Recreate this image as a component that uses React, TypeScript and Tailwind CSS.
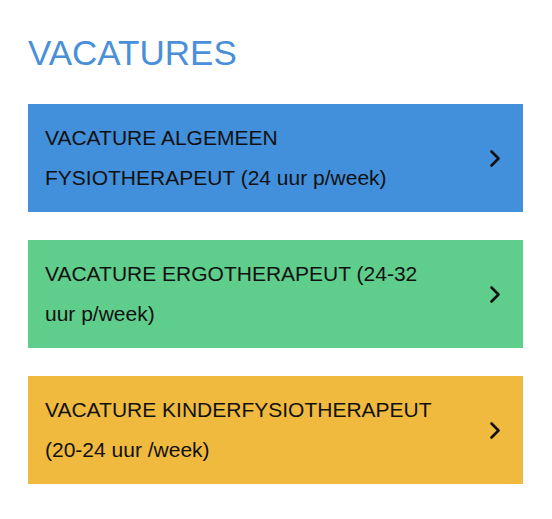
const vacatures = [
  {
    title: 'VACATURE ALGEMEEN FYSIOTHERAPEUT (24 uur p/week)',
    color: 'bg-[#428fdb]',
  },
  {
    title: 'VACATURE ERGOTHERAPEUT (24-32 uur p/week)',
    color: 'bg-[#5fcd8b]',
  },
  {
    title: 'VACATURE KINDERFYSIOTHERAPEUT (20-24 uur /week)',
    color: 'bg-[#f0ba3e]',
  },
];

const Chevron = () => (
  <svg width="12" height="19" viewBox="0 0 12 19" fill="none">
    <path
      d="M2.5 2.5l7 7-7 7"
      stroke="#111"
      strokeWidth={2.6}
      strokeLinecap="round"
      strokeLinejoin="round"
    />
  </svg>
);

const App = () => {
  return (
    <div className="min-h-[519px] w-[552px] bg-white px-[28px] pt-[34px] font-['Liberation_Sans',Arial,sans-serif]">
      <h1 className="text-[35px] leading-[38px] text-[#4a90d9]">VACATURES</h1>

      <div className="mt-[32px] flex w-[495px] flex-col gap-[28px]">
        {vacatures.map((v) => (
          <a
            key={v.title}
            href="#"
            className={`flex h-[108px] items-center justify-between pl-[17px] pr-[22px] ${v.color}`}
          >
            <span className="w-[395px] text-[21px] leading-[40px] text-[#111]">
              {v.title}
            </span>
            <Chevron />
          </a>
        ))}
      </div>
    </div>
  );
};

export default App;
